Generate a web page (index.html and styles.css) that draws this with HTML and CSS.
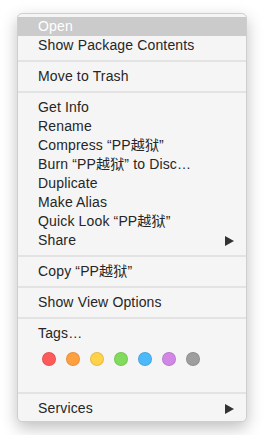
FILE: index.html
```html
<!DOCTYPE html>
<html lang="en">
<head>
  <meta charset="UTF-8" />
  <title>Context Menu</title>
  <link rel="stylesheet" href="styles.css">
</head>
<body>
  <div class="menu">
    <div class="item active">Open</div>
    <div class="item">Show Package Contents</div>
    <div class="sep"></div>
    <div class="item">Move to Trash</div>
    <div class="sep"></div>
    <div class="item">Get Info</div>
    <div class="item">Rename</div>
    <div class="item">Compress “PP越狱”</div>
    <div class="item">Burn “PP越狱” to Disc…</div>
    <div class="item">Duplicate</div>
    <div class="item">Make Alias</div>
    <div class="item">Quick Look “PP越狱”</div>
    <div class="item">Share
      <svg class="arrow" width="9" height="10" viewBox="0 0 9 10"><path d="M0 0 L9 5 L0 10 Z" fill="#333"/></svg>
    </div>
    <div class="sep"></div>
    <div class="item">Copy “PP越狱”</div>
    <div class="sep"></div>
    <div class="item">Show View Options</div>
    <div class="sep"></div>
    <div class="item">Tags…</div>
    <div class="tags">
      <span class="dot red"></span>
      <span class="dot orange"></span>
      <span class="dot yellow"></span>
      <span class="dot green"></span>
      <span class="dot blue"></span>
      <span class="dot purple"></span>
      <span class="dot gray"></span>
    </div>
    <div class="sep"></div>
    <div class="item">Services
      <svg class="arrow" width="9" height="10" viewBox="0 0 9 10"><path d="M0 0 L9 5 L0 10 Z" fill="#333"/></svg>
    </div>
  </div>
</body>
</html>
```

FILE: styles.css
```css
body {
  margin: 0;
  padding: 0;
  background: #ffffff;
  font-family: 'Liberation Sans', 'Noto Sans CJK SC', sans-serif;
}
.menu {
  box-sizing: border-box;
  width: 230px;
  margin: 13px 17px;
  padding: 3px 0;
  background: #f5f5f5;
  border: 1px solid #cfcfcf;
  border-radius: 5px;
  box-shadow: 0 6px 16px rgba(0, 0, 0, 0.25);
}
.item {
  height: 19px;
  line-height: 19px;
  padding: 0 12px 0 20px;
  font-size: 14px;
  letter-spacing: 0.15px;
  color: #262626;
  display: flex;
  align-items: center;
  justify-content: space-between;
  white-space: nowrap;
}
.item.active {
  background: #cbcbcb;
  color: #ffffff;
}
.sep {
  height: 2px;
  margin: 5px 0;
  background: #e3e3e3;
}
.tags {
  height: 44px;
  display: flex;
  gap: 10px;
  padding: 9px 0 0 24px;
  box-sizing: border-box;
}
.dot {
  width: 14px;
  height: 14px;
  border-radius: 50%;
  box-sizing: border-box;
  border: 1px solid rgba(0, 0, 0, 0.1);
}
.red { background: #ff5a5a; }
.orange { background: #ffa040; }
.yellow { background: #ffd24a; }
.green { background: #82dc5c; }
.blue { background: #4cb9fb; }
.purple { background: #d287e6; }
.gray { background: #9e9e9e; }
```
